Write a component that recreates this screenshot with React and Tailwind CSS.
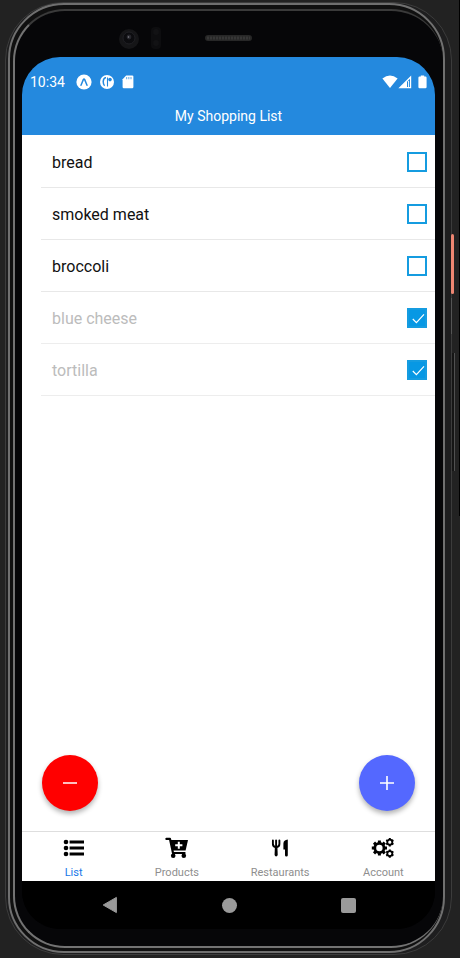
import React from "react";

const items = [
  { id: "bread", name: "bread", done: false },
  { id: "meat", name: "smoked meat", done: false },
  { id: "broccoli", name: "broccoli", done: false },
  { id: "cheese", name: "blue cheese", done: true },
  { id: "tortilla", name: "tortilla", done: true },
];

function ExpoIcon() {
  return (
    <svg width="16" height="16" viewBox="0 0 16 16" aria-hidden="true">
      <circle cx="8" cy="8" r="7.6" fill="#fff" />
      <path d="M5 11.2 L7.4 5.4 Q8 4.4 8.6 5.4 L11 11.2" fill="none" stroke="#2489de" strokeWidth="1.5" strokeLinecap="round" />
    </svg>
  );
}

function PocketIcon() {
  return (
    <svg width="14" height="16" viewBox="0 0 14 16" aria-hidden="true">
      <circle cx="7" cy="8" r="7" fill="#fff" />
      <path d="M6 3.8 H5.4 Q3.4 4.2 3.2 7.6 Q3.2 10.4 4.6 11.8" fill="none" stroke="#2489de" strokeWidth="1.5" />
      <path d="M7.5 3.4 V12.6" stroke="#2489de" strokeWidth="1.1" />
      <circle cx="10" cy="5.6" r="1.8" fill="#2489de" />
    </svg>
  );
}

function SdCardIcon() {
  return (
    <svg width="12" height="14" viewBox="0 0 12 14" aria-hidden="true">
      <path d="M4.2 0.6 H10.2 Q11.4 0.6 11.4 1.8 V12 Q11.4 13.2 10.2 13.2 H1.8 Q0.6 13.2 0.6 12 V4.2 Z" fill="#fff" />
      <path d="M4.6 2 V4.2 M6.8 2 V4.2 M9 2 V4.2" stroke="#7ab8ea" strokeWidth="1.2" />
    </svg>
  );
}

function WifiIcon() {
  return (
    <svg width="16" height="14" viewBox="0 0 16 14" aria-hidden="true">
      <path d="M0.4 3.4 Q8 -2.4 15.6 3.4 L8 13 Z" fill="#fff" />
    </svg>
  );
}

function SignalIcon() {
  return (
    <svg width="14" height="14" viewBox="0 0 14 14" aria-hidden="true">
      <path d="M0.4 13.2 L13.2 0.4 V13.2 Z" fill="#fff" />
      <path d="M9 6.8 L12 3.8 V12 H9 Z" fill="#2489de" />
      <path d="M10.6 6 V12" stroke="#fff" strokeWidth="1" />
    </svg>
  );
}

function BatteryIcon() {
  return (
    <svg width="9" height="14" viewBox="0 0 9 14" aria-hidden="true">
      <path d="M2.8 0.4 H6.2 V1.6 H7.4 Q8.6 1.6 8.6 2.8 V12 Q8.6 13.2 7.4 13.2 H1.6 Q0.4 13.2 0.4 12 V2.8 Q0.4 1.6 1.6 1.6 H2.8 Z" fill="#fff" />
    </svg>
  );
}

function ListIcon() {
  return (
    <svg width="22" height="18" viewBox="0 0 22 18" aria-hidden="true">
      <circle cx="3" cy="3" r="2.3" />
      <circle cx="3" cy="9" r="2.3" />
      <circle cx="3" cy="15" r="2.3" />
      <path d="M6.6 3 H21 M6.6 9 H21 M6.6 15 H21" stroke="#000" strokeWidth="3" />
    </svg>
  );
}

function CartIcon() {
  return (
    <svg width="24" height="22" viewBox="0 0 24 22" aria-hidden="true">
      <path d="M1.4 1.9 H5 L8 16 H19.6" fill="none" stroke="#000" strokeWidth="2.2" strokeLinejoin="round" strokeLinecap="round" />
      <path d="M5.4 3 H23 L20.6 13.4 H7.6 Z" fill="#000" />
      <circle cx="8.2" cy="18.8" r="2.3" />
      <circle cx="18.8" cy="18.8" r="2.3" />
      <path d="M13.8 4.8 V11.8 M10.2 8.3 H17.4" stroke="#fff" strokeWidth="2" />
    </svg>
  );
}

function CutleryIcon() {
  return (
    <svg width="18" height="18" viewBox="0 0 18 18" aria-hidden="true">
      <path d="M1.9 1.4 V5 Q1.9 8 5.1 8 Q8.4 8 8.4 5 V1.4" fill="none" stroke="#000" strokeWidth="1.9" strokeLinecap="round" />
      <path d="M5.1 1.4 V8" stroke="#000" strokeWidth="1.9" strokeLinecap="round" />
      <path d="M3.9 7 H6.4 L6.7 16 Q6.4 17.4 5.1 17.4 Q3.9 17.4 3.6 16 Z" />
      <path d="M16.8 0.6 V16.2 Q16.8 17.4 15.4 17.4 Q14 17.4 14 16.2 V10.4 H12.4 V4.4 Q12.6 1 16.8 0.6 Z" />
    </svg>
  );
}

function GearsIcon() {
  return (
    <svg width="24" height="22" viewBox="0 0 24 22" fill="none" stroke="#000" aria-hidden="true">
      <circle cx="8.4" cy="11" r="4.6" strokeWidth="2.8" />
      <path d="M8.4 3.4 V6 M8.4 16 V18.6 M0.8 11 H3.4 M13.4 11 H16 M3 5.6 L5 7.6 M11.8 14.4 L13.8 16.4 M3 16.4 L5 14.4 M11.8 7.6 L13.8 5.6" strokeWidth="3" />
      <circle cx="18.8" cy="5.2" r="2.5" strokeWidth="1.8" />
      <path d="M18.8 1 V3 M18.8 7.4 V9.4 M15.2 3.1 L16.9 4.1 M20.7 6.3 L22.4 7.3 M15.2 7.3 L16.9 6.3 M20.7 4.1 L22.4 3.1" strokeWidth="2" />
      <circle cx="18.8" cy="16.6" r="2.5" strokeWidth="1.8" />
      <path d="M18.8 12.4 V14.4 M18.8 18.8 V20.8 M15.2 14.5 L16.9 15.5 M20.7 17.7 L22.4 18.7 M15.2 18.7 L16.9 17.7 M20.7 15.5 L22.4 14.5" strokeWidth="2" />
    </svg>
  );
}

const tabs = [
  { label: "List", icon: <ListIcon />, active: true },
  { label: "Products", icon: <CartIcon /> },
  { label: "Restaurants", icon: <CutleryIcon /> },
  { label: "Account", icon: <GearsIcon /> },
];

function StatusBar() {
  return (
    <div className="flex h-12 items-center px-2 pt-px text-sm text-white">
      <span className="w-11 shrink-0">10:34</span>
      <div className="ml-0.5 flex items-center gap-2">
        <ExpoIcon />
        <PocketIcon />
        <SdCardIcon />
      </div>
      <div className="ml-auto flex items-center">
        <WifiIcon />
        <SignalIcon />
        <span className="ml-1.5 flex">
          <BatteryIcon />
        </span>
      </div>
    </div>
  );
}

function Item({ item }) {
  return (
    <li
      className={
        "flex h-[52px] items-center justify-between border-b pr-2 pl-[11px] " +
        (item.done ? "border-[#ededed] text-[#bcbcbc]" : "border-[#e8e8e8] text-[#111]")
      }
    >
      <label htmlFor={item.id} className="pt-0.5 text-base">
        {item.name}
      </label>
      <span className="relative flex">
        <input
          id={item.id}
          type="checkbox"
          defaultChecked={item.done}
          className="peer h-5 w-5 appearance-none border-2 border-[#159ce0] bg-white checked:bg-[#0798e4]"
        />
        <svg viewBox="0 0 20 20" className="pointer-events-none absolute inset-0 hidden h-5 w-5 peer-checked:block" aria-hidden="true">
          <path d="M5.8 11 L9.4 14.6 L17 6.4" fill="none" stroke="#fff" strokeWidth="1.2" />
        </svg>
      </span>
    </li>
  );
}

function Fab({ label, color, children }) {
  return (
    <button aria-label={label} className={"flex h-14 w-14 items-center justify-center rounded-full shadow-[0_3px_5px_rgba(0,0,0,0.3)] " + color}>
      <svg width="14" height="14" viewBox="0 0 14 14" fill="none" stroke="#fff" strokeWidth="1.6" aria-hidden="true">
        {children}
      </svg>
    </button>
  );
}

function SoftKeys() {
  return (
    <div className="flex h-12 items-center justify-center gap-[104px] bg-black">
      <button aria-label="Back">
        <svg width="16" height="18" viewBox="0 0 16 18" aria-hidden="true">
          <path d="M14.4 1.4 V16.6 L1.2 9 Z" fill="#9a9a9a" stroke="#9a9a9a" strokeLinejoin="round" />
        </svg>
      </button>
      <button aria-label="Home" className="h-[15px] w-[15px] rounded-full bg-[#9a9a9a]" />
      <button aria-label="Recent apps" className="h-[15px] w-[15px] rounded-xs bg-[#9a9a9a]" />
    </div>
  );
}

function Bezel() {
  return (
    <div className="flex h-[46px] items-center justify-center">
      <svg width="220" height="30" viewBox="0 0 220 30" aria-hidden="true">
        <circle cx="10" cy="20" r="10" fill="#151517" />
        <circle cx="10" cy="19" r="6" fill="#0c0c0f" stroke="#202024" />
        <circle cx="10" cy="18" r="2.4" fill="#26262c" />
        <circle cx="9.5" cy="18" r="0.8" fill="#85858c" />
        <rect x="32" y="8" width="10" height="22" rx="4" fill="#0d0d0f" />
        <circle cx="37" cy="13" r="3" fill="#121214" />
        <circle cx="37" cy="24" r="3" fill="#121214" />
        <rect x="86" y="16" width="47" height="6" rx="3" fill="#272727" />
        <path d="M88 19 H131" stroke="#363636" strokeWidth="3" strokeDasharray="2 1" />
      </svg>
    </div>
  );
}

export default function App() {
  return (
    <div className="relative flex min-h-screen flex-col bg-[#222] pt-0.5 pr-2 pb-[3px] pl-[5px] font-[Roboto,sans-serif]">
      <div className="absolute top-0 right-0 h-[516px] w-px bg-black" />
      <div className="absolute top-[234px] right-1.5 h-[60px] w-[3px] rounded-xs bg-[#ee8672]" />
      <div className="absolute top-[298px] right-2 h-9 w-px bg-[#555]" />
      <div className="absolute top-[353px] right-[5px] h-[118px] w-[3px] border-r border-[#505050] bg-[#151515]" />

      <div className="flex grow flex-col rounded-[58px] border border-[#3c3c3c] bg-[#1e1e1f] pr-[6px] pb-px pl-0.5">
        <div className="flex grow flex-col rounded-[56px] border-2 border-[#707070] bg-[#101010] pt-1 pb-[3px] pl-[3px]">
          <div className="flex grow flex-col rounded-[52px] border-2 border-r-0 border-[#737373] border-t-[#3a3a3a] bg-[#060608] pr-2 pb-[17px] pl-[7px]">
            <Bezel />
            <div className="flex grow flex-col overflow-hidden rounded-[38px] bg-black">
              <header className="bg-[#2489de] text-white">
                <StatusBar />
                <h1 className="flex h-[30px] items-center justify-center pb-2 text-sm leading-5">My Shopping List</h1>
              </header>

              <main className="flex grow flex-col justify-between bg-white">
                <ul className="ml-[19px] pt-px">
                  {items.map((item) => (
                    <Item key={item.id} item={item} />
                  ))}
                </ul>
                <div className="flex justify-between px-5 pb-5">
                  <Fab label="Remove item" color="bg-[#ff0000]">
                    <path d="M0 7 H14" />
                  </Fab>
                  <Fab label="Add item" color="bg-[#5468ff]">
                    <path d="M0 7 H14 M7 0 V14" />
                  </Fab>
                </div>
              </main>

              <nav className="grid h-[50px] grid-cols-4 border-t border-[#dedede] bg-white">
                {tabs.map((tab) => (
                  <a key={tab.label} href="#" className="flex flex-col items-center gap-px">
                    <span className="flex h-8 items-center justify-center text-black">{tab.icon}</span>
                    <span className={"text-[11px] leading-4 " + (tab.active ? "text-[#1677e8]" : "text-[#8e8e8e]")}>{tab.label}</span>
                  </a>
                ))}
              </nav>
              <SoftKeys />
            </div>
          </div>
        </div>
      </div>
    </div>
  );
}
